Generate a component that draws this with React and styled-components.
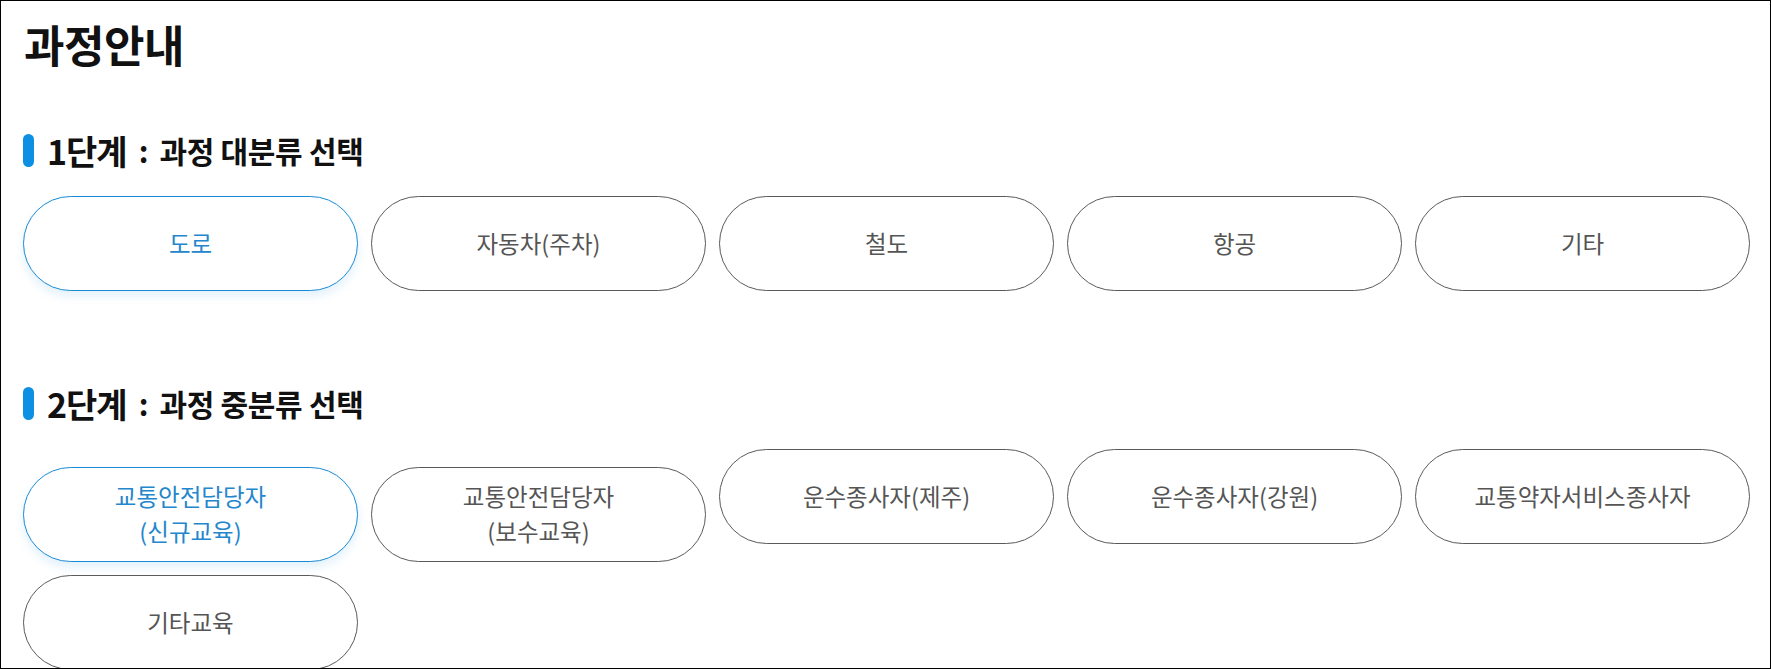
import React, { useState } from 'react';
import styled, { createGlobalStyle } from 'styled-components';

const GlobalStyle = createGlobalStyle`
  html, body {
    margin: 0;
    padding: 0;
    background: #fff;
  }
  body {
    font-family: 'Noto Sans CJK KR', 'Noto Sans', sans-serif;
  }
  * {
    box-sizing: border-box;
  }
`;

const steps = [
  {
    step: '1단계',
    label: '과정 대분류 선택',
    items: ['도로', '자동차(주차)', '철도', '항공', '기타'],
  },
  {
    step: '2단계',
    label: '과정 중분류 선택',
    items: [
      '교통안전담당자\n(신규교육)',
      '교통안전담당자\n(보수교육)',
      '운수종사자(제주)',
      '운수종사자(강원)',
      '교통약자서비스종사자',
      '기타교육',
    ],
  },
];

export default function App() {
  const [Selected, setSelected] = useState([0, 0]);

  const onSelectHandler = (stepIndex, itemIndex) => {
    const next = [...Selected];
    next[stepIndex] = itemIndex;
    setSelected(next);
  };

  return (
    <Page>
      <GlobalStyle />
      <Title>과정안내</Title>
      {steps.map((s, stepIndex) => (
        <Section key={s.step} $first={stepIndex === 0}>
          <StepHeading>
            <Marker />
            <StepNo>{s.step}</StepNo>
            <Colon>:</Colon>
            <StepLabel>{s.label}</StepLabel>
          </StepHeading>
          <ButtonGrid>
            {s.items.map((item, itemIndex) => (
              <CourseButton
                key={item}
                $active={Selected[stepIndex] === itemIndex}
                onClick={() => onSelectHandler(stepIndex, itemIndex)}
              >
                <span>
                  {item.split('\n').map((line, i) => (
                    <React.Fragment key={line}>
                      {i > 0 && <br />}
                      {line}
                    </React.Fragment>
                  ))}
                </span>
              </CourseButton>
            ))}
          </ButtonGrid>
        </Section>
      ))}
    </Page>
  );
}

const Page = styled.div`
  height: 100vh;
  overflow: hidden;
  border: 1px solid #000;
  padding: 0 20px 0 22px;
`;

const Title = styled.h2`
  margin: 19px 0 0 1px;
  font-size: 44px;
  line-height: 48px;
  font-weight: 700;
  color: #111;
  letter-spacing: -0.5px;
`;

const Section = styled.section`
  margin-top: ${props => (props.$first ? '65px' : '95px')};
`;

const StepHeading = styled.h3`
  display: flex;
  align-items: center;
  margin: 0;
  height: 34px;
  color: #111;
  font-weight: 700;
`;

const Marker = styled.i`
  display: block;
  width: 11px;
  height: 33px;
  border-radius: 6px;
  background: #0d8fe3;
  margin-right: 13px;
`;

const StepNo = styled.span`
  font-size: 34px;
  letter-spacing: -1px;
`;

const Colon = styled.span`
  font-size: 30px;
  margin: 0 11px 0 12px;
`;

const StepLabel = styled.span`
  font-size: 30px;
  letter-spacing: -0.3px;
`;

const ButtonGrid = styled.div`
  display: grid;
  grid-template-columns: repeat(5, 1fr);
  column-gap: 13px;
  row-gap: 13px;
  align-items: baseline;
  margin-top: 29px;
`;

const CourseButton = styled.button`
  display: flex;
  align-items: center;
  justify-content: center;
  height: 95px;
  padding: 0 20px;
  border-radius: 48px;
  border: 1px solid ${props => (props.$active ? '#1a8ad6' : '#5a5a5a')};
  background: #fff;
  color: ${props => (props.$active ? '#2486cc' : '#555')};
  box-shadow: ${props =>
    props.$active ? '0 5px 10px rgba(20, 140, 220, 0.12)' : 'none'};
  font-family: 'Noto Sans CJK KR', 'Noto Sans', sans-serif;
  font-size: 23.5px;
  line-height: 35px;
  text-align: center;
  cursor: pointer;
`;
